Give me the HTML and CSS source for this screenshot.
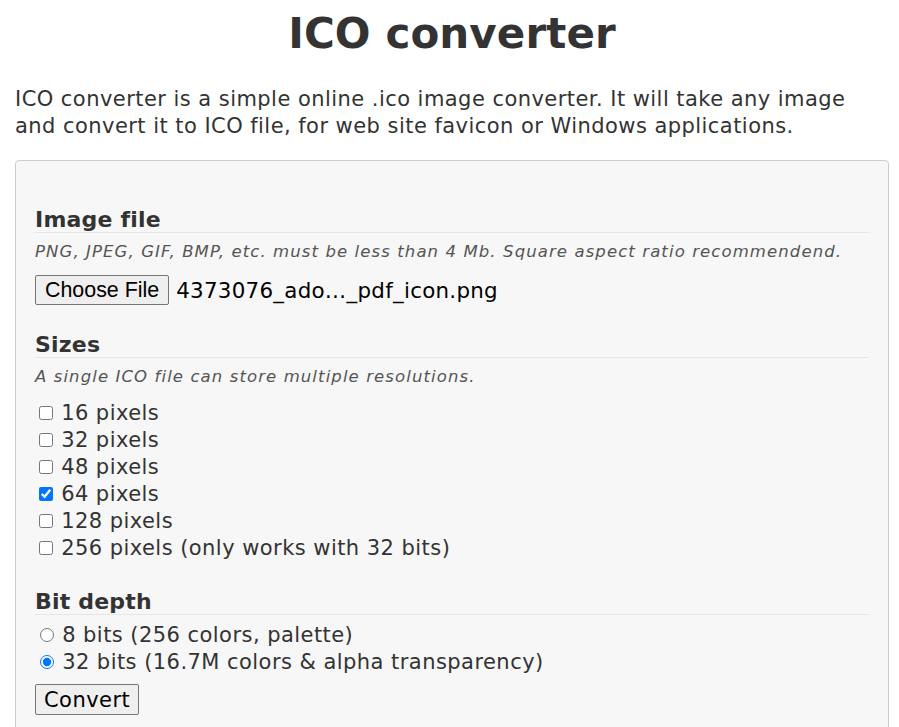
FILE: index.html
```html
<!DOCTYPE html>
<html lang="en">
<head>
<meta charset="utf-8">
<title>ICO converter</title>
<link rel="stylesheet" href="styles.css">
</head>
<body>
<div class="page">
  <h1 class="title">ICO converter</h1>
  <p class="intro">ICO converter is a simple online .ico image converter. It will take any image and convert it to ICO file, for web site favicon or Windows applications.</p>
  <form class="panel">
    <section class="group first">
      <h2 class="group-title">Image file</h2>
      <p class="hint">PNG, JPEG, GIF, BMP, etc. must be less than 4 Mb. Square aspect ratio recommendend.</p>
      <div class="file-row">
        <button type="button" class="file-btn">Choose File</button>
        <span class="file-name">4373076_ado…_pdf_icon.png</span>
      </div>
    </section>
    <section class="group">
      <h2 class="group-title">Sizes</h2>
      <p class="hint">A single ICO file can store multiple resolutions.</p>
      <div class="options">
        <label class="opt"><input type="checkbox"> 16 pixels</label>
        <label class="opt"><input type="checkbox"> 32 pixels</label>
        <label class="opt"><input type="checkbox"> 48 pixels</label>
        <label class="opt"><input type="checkbox" checked> 64 pixels</label>
        <label class="opt"><input type="checkbox"> 128 pixels</label>
        <label class="opt"><input type="checkbox"> 256 pixels (only works with 32 bits)</label>
      </div>
    </section>
    <section class="group">
      <h2 class="group-title">Bit depth</h2>
      <div class="options radios">
        <label class="opt"><input type="radio" name="bpp"> 8 bits (256 colors, palette)</label>
        <label class="opt"><input type="radio" name="bpp" checked> 32 bits (16.7M colors &amp; alpha transparency)</label>
      </div>
      <button type="button" class="convert">Convert</button>
    </section>
  </form>
</div>
</body>
</html>
```

FILE: styles.css
```css
html, body {
  margin: 0;
  padding: 0;
  background: #ffffff;
}

body {
  font-family: "DejaVu Sans", Verdana, sans-serif;
  color: #333333;
}

.page {
  padding: 0 10px 0 15px;
}

.title {
  margin: 9px 0 0;
  font-size: 42px;
  font-weight: bold;
  text-align: center;
  line-height: normal;
  letter-spacing: 0.1px;
}

.intro {
  margin: 28px 0 0;
  font-size: 21px;
  line-height: 27px;
  letter-spacing: 0.45px;
}

.panel {
  margin: 20px 0 0;
  border: 1px solid #cccccc;
  border-radius: 4px;
  background: #f7f7f7;
  padding: 20px 19px 40px;
}

.group {
  margin-top: 27px;
}

.group.first {
  margin-top: 26px;
}

.group-title {
  margin: 0;
  font-size: 22px;
  font-weight: bold;
  line-height: normal;
  letter-spacing: 0.2px;
  border-bottom: 1px solid #e6e6e6;
}

.hint {
  margin: 9px 0 0;
  font-size: 16.5px;
  font-style: italic;
  color: #555555;
  line-height: normal;
  letter-spacing: 1.1px;
}

.file-row {
  margin-top: 14px;
  display: flex;
  align-items: center;
  gap: 7px;
}

.file-btn {
  font-family: "Liberation Sans", Arial, sans-serif;
  font-size: 21.4px;
  color: #000000;
  background: #efefef;
  border: 1px solid #767676;
  border-radius: 2px;
  padding: 1px 9px;
  line-height: normal;
  height: 30px;
}

.file-name {
  font-size: 21.4px;
  color: #000000;
  letter-spacing: 0.27px;
}

.options {
  margin-top: 14px;
  display: flex;
  flex-direction: column;
  font-size: 21px;
  line-height: 27px;
  letter-spacing: 0.45px;
}

.options.radios {
  margin-top: 7px;
}

.opt {
  display: block;
}

.opt input {
  width: 14px;
  height: 14px;
  margin: 3px 1px 0 4px;
}

.opt input[type="radio"] {
  margin-left: 5px;
}

.convert {
  margin-top: 8px;
  font-family: "DejaVu Sans", Verdana, sans-serif;
  font-size: 21px;
  color: #000000;
  background: #efefef;
  border: 1px solid #767676;
  border-radius: 2px;
  padding: 2px 8px;
  line-height: normal;
  letter-spacing: 0.45px;
  height: 31px;
}
```
